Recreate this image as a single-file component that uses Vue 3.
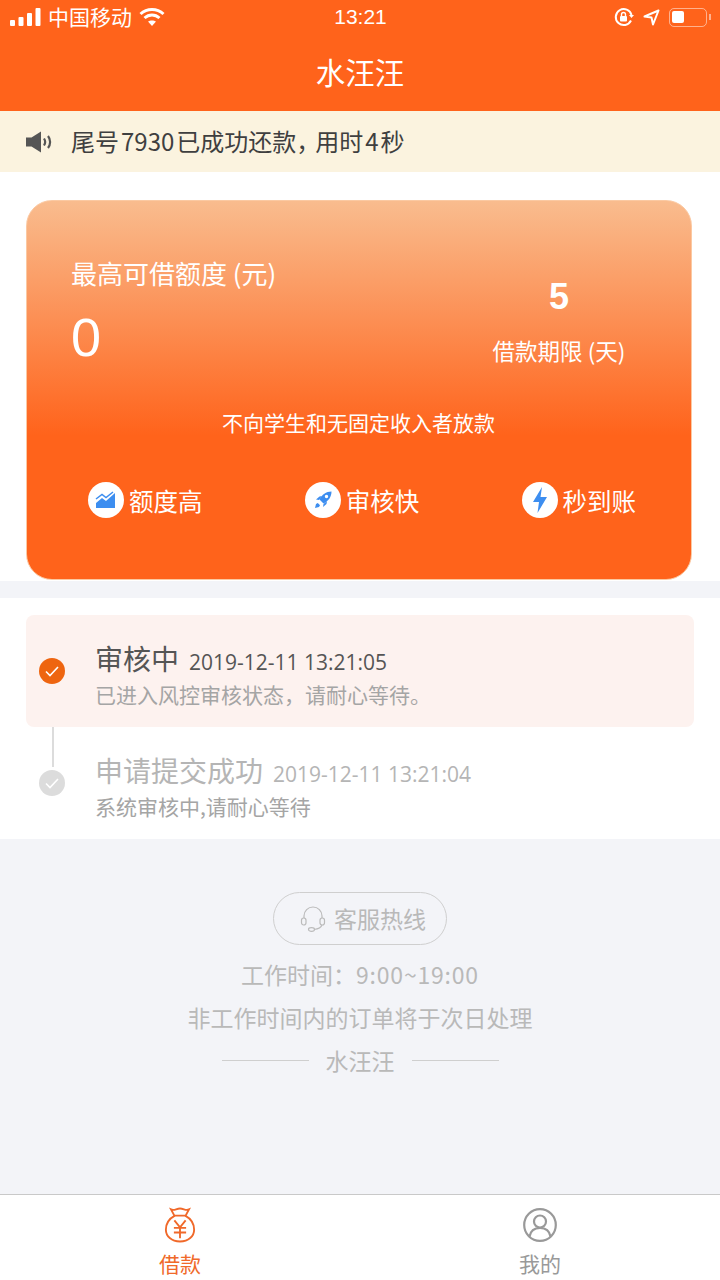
<script setup>
const features = [
  { key: 'high', label: '额度高' },
  { key: 'fast', label: '审核快' },
  { key: 'instant', label: '秒到账' }
]
</script>

<template>
  <div class="page">
    <header class="top">
      <div class="status">
        <div class="status-side">
          <svg class="signal" width="31" height="18" viewBox="0 0 31 18">
            <rect x="0" y="12" width="5" height="6" rx="1" />
            <rect x="8.5" y="9" width="5" height="9" rx="1" />
            <rect x="17" y="5" width="5" height="13" rx="1" />
            <rect x="25.5" y="0" width="5" height="18" rx="1" />
          </svg>
          <span class="carrier">中国移动</span>
          <svg width="26" height="20" viewBox="0 0 26 20" fill="none" stroke="#fff" stroke-width="3">
            <path d="M1.5 7 C8 1 18 1 24.5 7" />
            <path d="M5.5 11 C10 7 16 7 20.5 11" />
            <path d="M13 19 L9 14.6 C11 13 15 13 17 14.6 Z" fill="#fff" stroke="none" />
          </svg>
        </div>
        <span class="clock">13:21</span>
        <div class="status-side status-right">
          <svg width="20" height="20" viewBox="0 0 20 20" fill="none" stroke="#fff" stroke-width="2">
            <path d="M17.5 8 A8 8 0 1 0 17 13.5" />
            <path d="M15 8 L20 8 L17.5 11 Z" fill="#fff" stroke="none" />
            <rect x="6" y="9" width="7" height="5.5" rx="1" fill="#fff" stroke="none" />
            <path d="M7.5 9 V7.5 A2 2 0 0 1 11.5 7.5 V9" stroke-width="1.4" />
          </svg>
          <svg width="17" height="17" viewBox="0 0 17 17" fill="none" stroke="#fff" stroke-width="2" stroke-linejoin="round">
            <path d="M15.5 1.5 L1.5 7.5 L8.5 8.5 L10 15.5 Z" />
          </svg>
          <div class="battery"><i class="level"></i></div>
          <i class="battery-cap"></i>
        </div>
      </div>
      <h1 class="title">水汪汪</h1>
    </header>

    <div class="notice">
      <svg width="27" height="22" viewBox="0 0 27 22">
        <path d="M0 6.5 H5.5 L15 0.5 V21.5 L5.5 15.5 H0 Z" fill="#555" />
        <path d="M18 7.5 C19.4 9.6 19.4 12.4 18 14.5" fill="none" stroke="#555" stroke-width="2.2" />
        <path d="M22 5 C24.8 8.5 24.8 13.5 22 17" fill="none" stroke="#555" stroke-width="2.2" />
      </svg>
      <span class="notice-text">尾号<span class="num">7930</span>已成功还款<span class="comma">，</span>用时<span class="num">4</span>秒</span>
    </div>

    <section class="card-wrap">
      <div class="card">
        <div class="quota">
          <div class="quota-main">
            <div class="quota-label">最高可借额度 (元)</div>
            <div class="quota-value">0</div>
          </div>
          <div class="term">
            <div class="term-value">5</div>
            <div class="term-label">借款期限 (天)</div>
          </div>
        </div>
        <div class="tip">不向学生和无固定收入者放款</div>
        <div class="features">
          <div v-for="item in features" :key="item.key" class="feature">
            <span class="feature-icon">
              <svg v-if="item.key === 'high'" width="22" height="18" viewBox="0 0 22 18">
                <path d="M1 17 V12 L7 7 L11 10 L20 2 V17 Z" fill="#3d8ef0" />
                <path d="M1 8 L7 3.5 L11 6.5 L18 1" fill="none" stroke="#3d8ef0" stroke-width="1.5" />
              </svg>
              <svg v-else-if="item.key === 'fast'" width="20" height="20" viewBox="0 0 20 20">
                <path fill-rule="evenodd" fill="#3d8ef0" d="M18.5 1.5 C13 1.5 9 4.5 6.5 9.5 L10.5 13.5 C15.5 11 18.5 7 18.5 1.5 Z M13.5 4.8 A1.7 1.7 0 1 0 13.5 8.2 A1.7 1.7 0 1 0 13.5 4.8 Z" />
                <path fill="#3d8ef0" d="M6.5 6.5 L9 6 L6 10 L3 9.5 Z M14 11 L13.5 14 L10 17 L10.5 14 Z M2 18 L3 14 L4.8 13 L7 15.2 L6 17 Z" />
              </svg>
              <svg v-else width="16" height="26" viewBox="0 0 16 26">
                <path d="M10 0 L1 15 H7 L5.5 26 L15 10 H8.5 Z" fill="#3d8ef0" />
              </svg>
            </span>
            <span>{{ item.label }}</span>
          </div>
        </div>
      </div>
    </section>

    <section class="steps">
      <div class="step step-active">
        <span class="dot dot-on">
          <svg width="18" height="14" viewBox="0 0 18 14" fill="none" stroke="#fff" stroke-width="1.6">
            <path d="M3 7.5 L7 11.5 L15 3" />
          </svg>
        </span>
        <div class="step-body">
          <div class="step-head">
            <span class="step-name">审核中</span>
            <span class="step-time">2019-12-11 13:21:05</span>
          </div>
          <div class="step-desc">已进入风控审核状态，请耐心等待。</div>
        </div>
      </div>
      <div class="step step-done">
        <i class="line"></i>
        <span class="dot dot-off">
          <svg width="18" height="14" viewBox="0 0 18 14" fill="none" stroke="#fff" stroke-width="1.6">
            <path d="M3 7.5 L7 11.5 L15 3" />
          </svg>
        </span>
        <div class="step-body">
          <div class="step-head">
            <span class="step-name">申请提交成功</span>
            <span class="step-time">2019-12-11 13:21:04</span>
          </div>
          <div class="step-desc">系统审核中,请耐心等待</div>
        </div>
      </div>
    </section>

    <section class="service">
      <div class="hotline">
        <svg width="26" height="26" viewBox="0 0 26 26" fill="none" stroke="#bbb" stroke-width="1.2">
          <path d="M4 12 V10 A9 9 0 0 1 22 10 V12" />
          <rect x="1.5" y="12" width="4.5" height="7" rx="2.2" />
          <rect x="20" y="12" width="4.5" height="7" rx="2.2" />
          <path d="M22 19 C21 22 18 23 14 23.5" />
          <ellipse cx="11.5" cy="23.5" rx="3" ry="1.8" />
        </svg>
        <span class="hotline-text">客服热线</span>
      </div>
      <div class="service-line">工作时间：<span class="hours">9:00~19:00</span></div>
      <div class="service-line">非工作时间内的订单将于次日处理</div>
      <div class="brand"><i></i><span>水汪汪</span><i></i></div>
    </section>

    <nav class="tabs">
      <div class="tab tab-on">
        <span class="tab-icon">
          <svg width="32" height="36" viewBox="0 0 34 38" fill="none" stroke="#f0692a" stroke-width="2">
            <path d="M11 9 L7.5 2.5 C11 4 13 1.5 17 1.5 C21 1.5 23 4 26.5 2.5 L23 9 Z" />
            <path d="M11.5 9 C5 12.5 2 18 2 24 C2 31 8 36.5 17 36.5 C26 36.5 32 31 32 24 C32 18 29 12.5 22.5 9" />
            <path d="M11 14 L17 21.5 L23 14 M10.5 22 H23.5 M10.5 27 H23.5 M17 21.5 V33" />
          </svg>
        </span>
        <span>借款</span>
      </div>
      <div class="tab">
        <span class="tab-icon">
          <svg width="34" height="34" viewBox="0 0 34 34" fill="none" stroke="#999" stroke-width="2.2">
            <circle cx="17" cy="17" r="15.8" />
            <circle cx="17" cy="13.5" r="6" />
            <path d="M6.5 28.5 C7.5 23 11.5 20 17 20 C22.5 20 26.5 23 27.5 28.5" />
          </svg>
        </span>
        <span>我的</span>
      </div>
    </nav>
  </div>
</template>

<style scoped>
.page {
  width: 720px;
  height: 1280px;
  display: flex;
  flex-direction: column;
  background: #f3f4f8;
  font-family: "Noto Sans CJK SC", "Liberation Sans", sans-serif;
  overflow: hidden;
}
.top {
  height: 111px;
  background: #ff631b;
  color: #fff;
}
.status {
  height: 34px;
  padding: 0 9px 0 10px;
  display: grid;
  grid-template-columns: 1fr auto 1fr;
  align-items: center;
}
.status-side {
  display: flex;
  align-items: center;
  gap: 7px;
}
.status-right {
  justify-content: flex-end;
  gap: 9px;
}
.signal rect { fill: #fff; }
.carrier { margin-bottom: 3px; font-size: 21px; }
.clock { font-family: "Liberation Sans", sans-serif; font-size: 21px; }
.battery {
  width: 38px;
  height: 19px;
  margin-right: -7px;
  padding: 2px;
  box-sizing: border-box;
  border: 1.5px solid rgba(255, 255, 255, 0.5);
  border-radius: 5px;
}
.level {
  display: block;
  width: 12px;
  height: 12px;
  background: #fff;
  border-radius: 2px;
}
.battery-cap {
  width: 2px;
  height: 6px;
  background: rgba(255, 255, 255, 0.5);
}
.title {
  margin: 0;
  padding-top: 15px;
  font-size: 29.5px;
  font-weight: 400;
  line-height: 44px;
  text-align: center;
}
.notice {
  height: 61px;
  padding-left: 26px;
  display: flex;
  align-items: center;
  gap: 18px;
  background: #fbf3df;
  color: #3f3f3f;
  font-size: 24px;
}
.notice-text { margin-bottom: 3px; }
.num { margin: 0 2px; }
.comma { letter-spacing: -5px; }
.card-wrap {
  padding: 28px 28px 1px 26px;
  background: #fff;
}
.card {
  height: 380px;
  box-sizing: border-box;
  padding: 50px 45px 0 44px;
  border: 1px solid #fbc9a2;
  border-radius: 26px;
  background: linear-gradient(180deg, #f9bc8e 0%, #ff631b 62%, #ff631b 100%);
  color: #fff;
}
.quota {
  display: flex;
  justify-content: space-between;
}
.quota-label { padding-bottom: 4px; font-size: 26px; line-height: 44px; }
.quota-value {
  font-family: "Liberation Sans", sans-serif;
  font-size: 54px;
  line-height: 76px;
}
.term {
  width: 180px;
  margin-right: -3px;
  padding-top: 24px;
  text-align: center;
}
.term-value {
  font-family: "Liberation Sans", sans-serif;
  font-size: 36px;
  font-weight: 700;
  line-height: 44px;
}
.term-label { font-size: 22.5px; line-height: 62px; }
.tip {
  margin-top: 25px;
  text-align: center;
  font-size: 21px;
  line-height: 32px;
}
.features {
  margin: 44px 10px 0 17px;
  display: flex;
  justify-content: space-between;
}
.feature {
  display: flex;
  align-items: center;
  gap: 5px;
  font-size: 24.5px;
}
.feature-icon {
  width: 36px;
  height: 36px;
  display: flex;
  align-items: center;
  justify-content: center;
  border-radius: 50%;
  background: #fff;
}
.steps {
  margin-top: 17px;
  padding: 17px 26px 0;
  height: 241px;
  box-sizing: border-box;
  background: #fff;
}
.step {
  position: relative;
  height: 112px;
  display: flex;
  align-items: center;
}
.step-active {
  border-radius: 8px;
  background: #fdf2ef;
}
.dot {
  width: 26px;
  height: 26px;
  margin: 0 30px 0 13px;
  display: flex;
  flex-shrink: 0;
  align-items: center;
  justify-content: center;
  border-radius: 50%;
}
.dot-on { background: #ee6510; }
.dot-off { background: #dcdcdc; }
.line {
  position: absolute;
  left: 26px;
  top: 0;
  width: 2px;
  height: 40px;
  background: #dcdcdc;
}
.step-body { padding-top: 6px; }
.step-head {
  display: flex;
  align-items: baseline;
  gap: 10px;
}
.step-name { font-size: 28px; line-height: 38px; color: #555; }
.step-time { font-family: "Open Sans", sans-serif; font-size: 21px; color: #555; }
.step-desc { margin-top: 1px; font-size: 21px; line-height: 32px; color: #a5a5a5; }
.step-done .step-name,
.step-done .step-time { color: #b5b5b5; }
.service {
  flex: 1;
  padding-top: 53px;
  display: flex;
  flex-direction: column;
  align-items: center;
  color: #b9b9b9;
  font-size: 23px;
}
.hotline {
  width: 174px;
  height: 53px;
  box-sizing: border-box;
  margin-bottom: 8px;
  padding-left: 6px;
  display: flex;
  align-items: center;
  justify-content: center;
  gap: 8px;
  border: 1.5px solid #cfcfcf;
  border-radius: 27px;
}
.hotline-text { margin-bottom: 2px; }
.service-line { line-height: 43px; }
.hours { letter-spacing: 0.8px; }
.brand {
  display: flex;
  align-items: center;
  gap: 17px;
  line-height: 42px;
}
.brand i {
  width: 87px;
  height: 1px;
  background: #cfcfcf;
}
.tabs {
  height: 86px;
  box-sizing: border-box;
  display: flex;
  border-top: 1px solid #c9c9c9;
  background: #fff;
}
.tab {
  flex: 1;
  padding-top: 12px;
  display: flex;
  flex-direction: column;
  align-items: center;
  gap: 5px;
  color: #999;
  font-size: 21px;
  line-height: 30px;
}
.tab-icon {
  height: 36px;
  display: flex;
  align-items: center;
}
.tab-on { color: #f0692a; }
</style>
